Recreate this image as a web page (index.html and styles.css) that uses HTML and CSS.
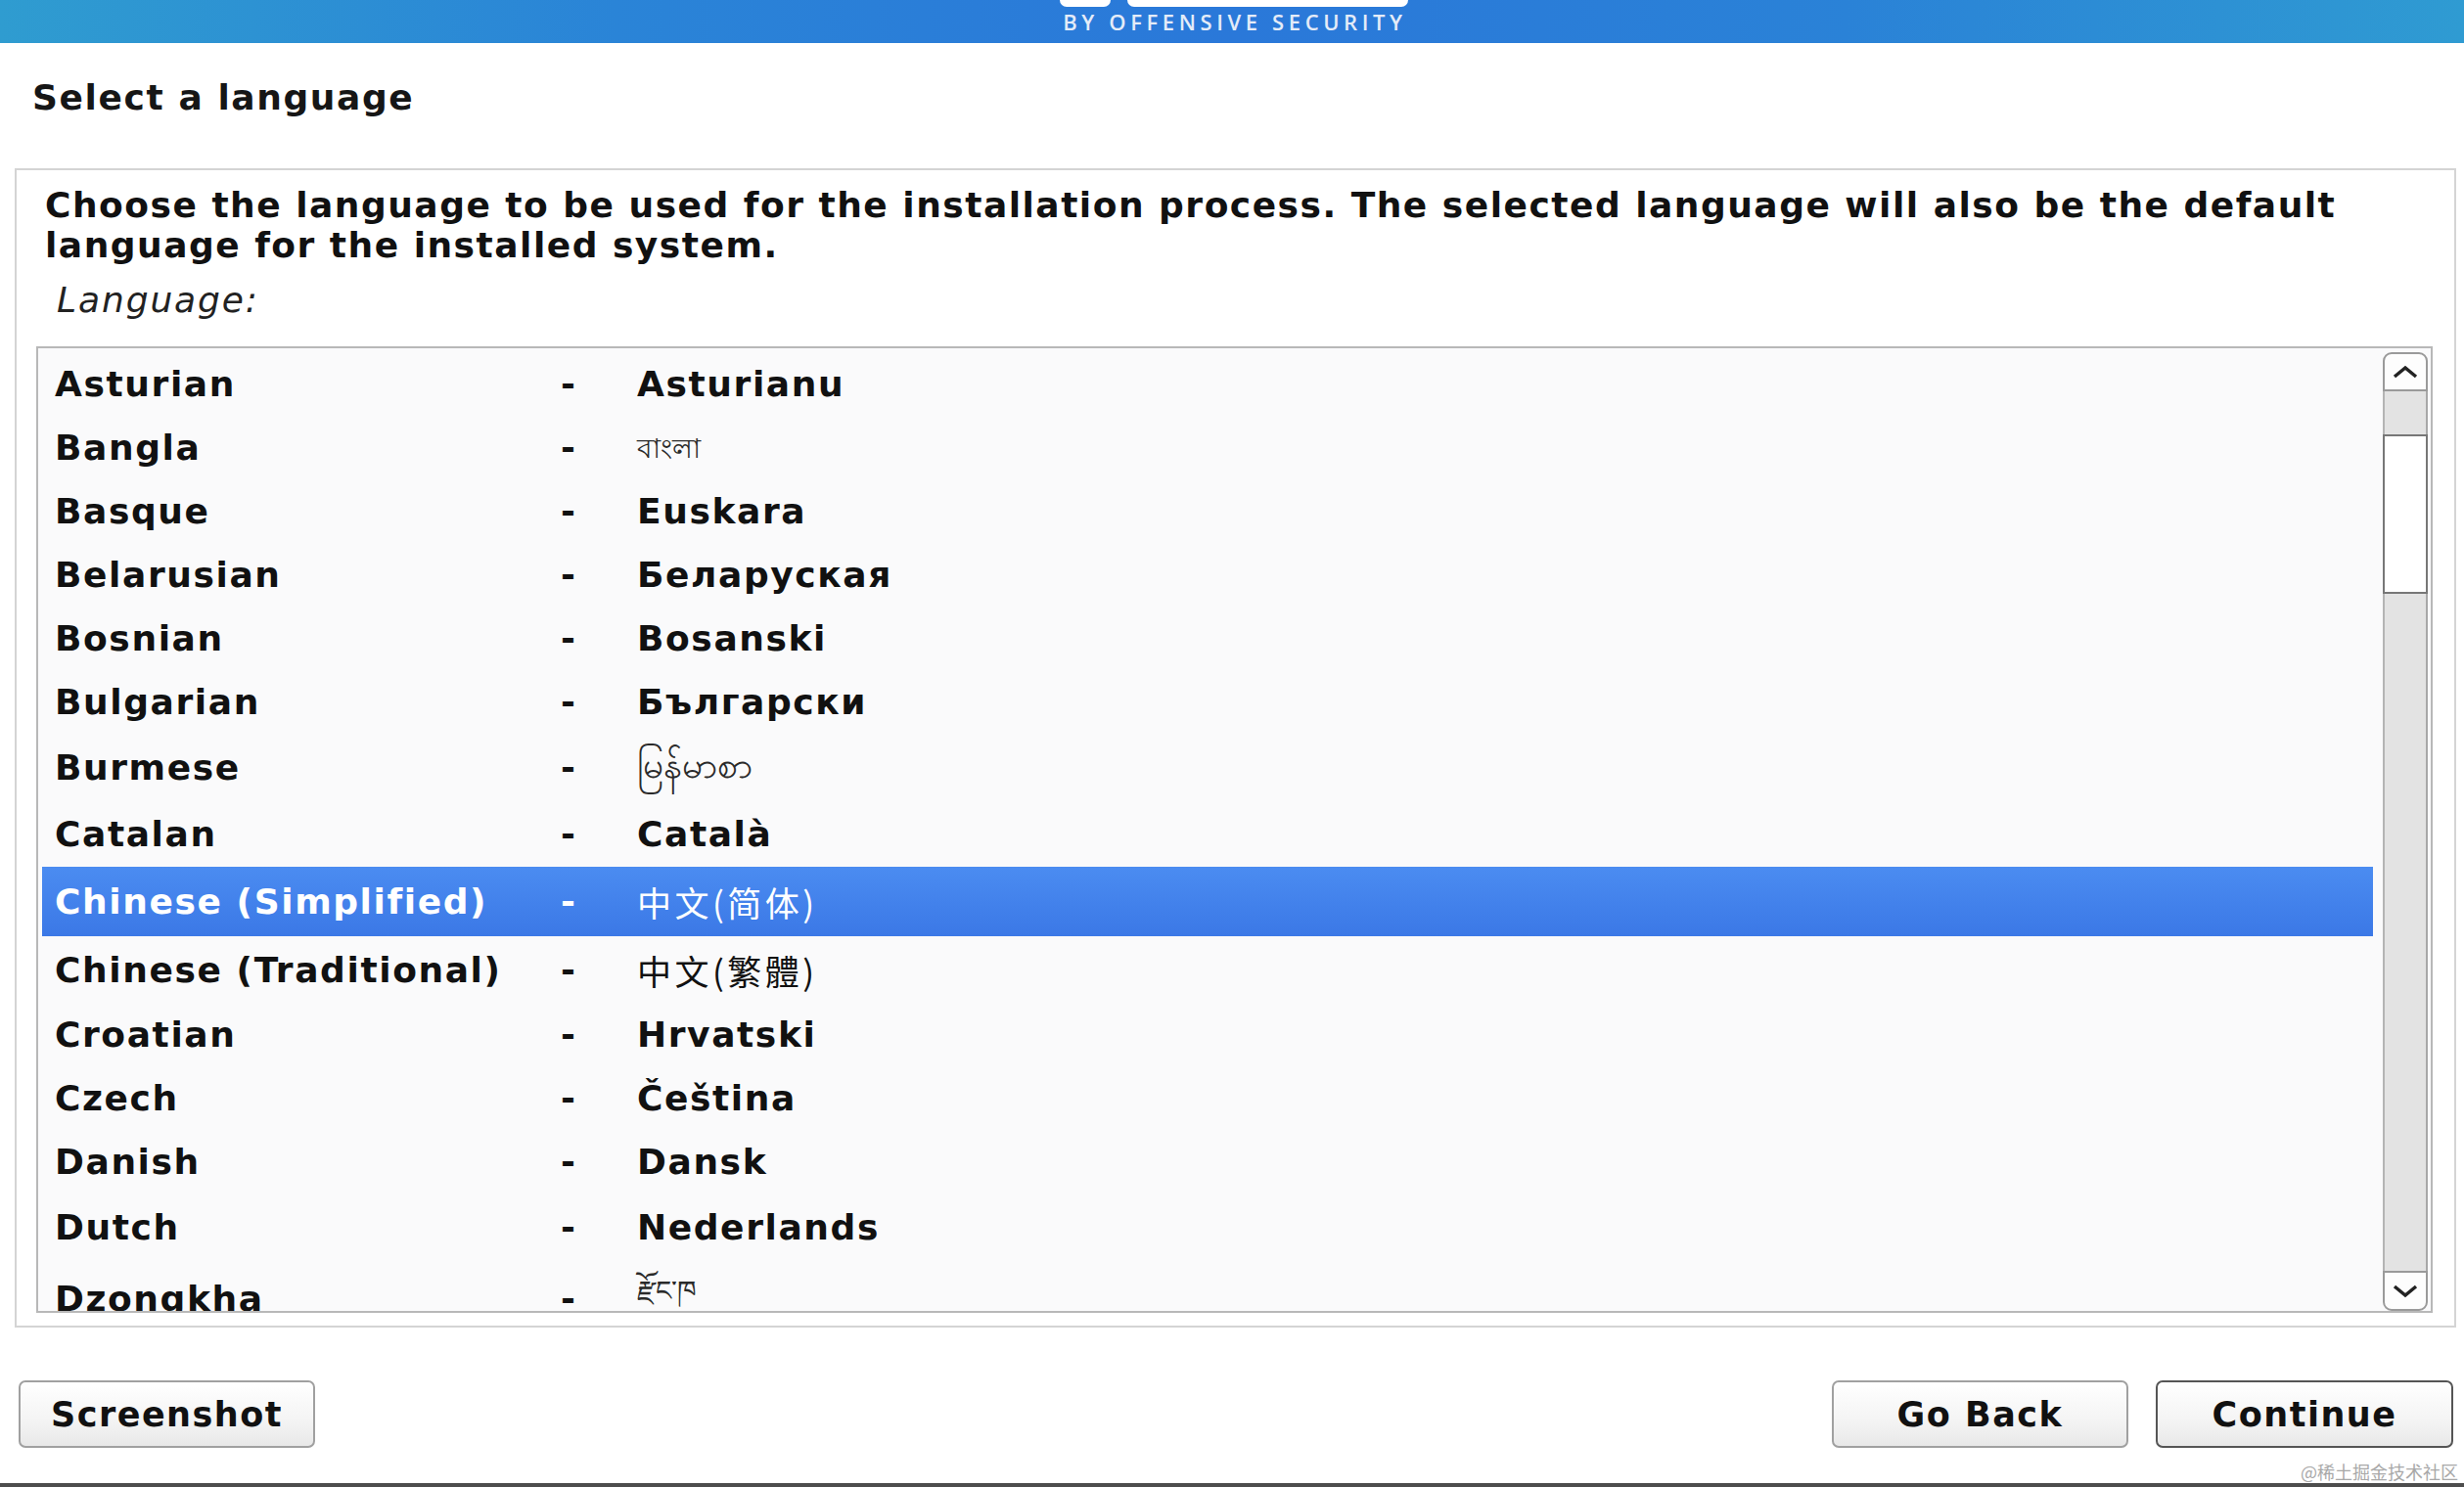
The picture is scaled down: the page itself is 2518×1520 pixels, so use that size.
FILE: index.html
```html
<!DOCTYPE html>
<html lang="en">
<head>
<meta charset="utf-8">
<title>Select a language</title>
<link rel="stylesheet" href="styles.css">
</head>
<body>
<header class="banner">
  <div class="logo">
    <span class="logo-piece small"></span>
    <span class="logo-piece big"></span>
  </div>
  <div class="tagline">BY OFFENSIVE SECURITY</div>
</header>

<main class="page">
  <h1 class="title">Select a language</h1>

  <section class="panel">
    <p class="desc">Choose the language to be used for the installation process. The selected language will also be the default language for the installed system.</p>
    <div class="label">Language:</div>

    <div class="listbox">
      <ul class="rows">
        <li class="row"><span class="name">Asturian</span><span class="dash">-</span><span class="native">Asturianu</span></li>
        <li class="row"><span class="name">Bangla</span><span class="dash">-</span><span class="native script bn">বাংলা</span></li>
        <li class="row"><span class="name">Basque</span><span class="dash">-</span><span class="native">Euskara</span></li>
        <li class="row"><span class="name">Belarusian</span><span class="dash">-</span><span class="native">Беларуская</span></li>
        <li class="row"><span class="name">Bosnian</span><span class="dash">-</span><span class="native">Bosanski</span></li>
        <li class="row"><span class="name">Bulgarian</span><span class="dash">-</span><span class="native">Български</span></li>
        <li class="row tall"><span class="name">Burmese</span><span class="dash">-</span><span class="native script my">မြန်မာစာ</span></li>
        <li class="row tall"><span class="name">Catalan</span><span class="dash">-</span><span class="native">Català</span></li>
        <li class="row taller selected"><span class="name">Chinese (Simplified)</span><span class="dash">-</span><span class="native cjk">中文(简体)</span></li>
        <li class="row tall"><span class="name">Chinese (Traditional)</span><span class="dash">-</span><span class="native cjk tc">中文(繁體)</span></li>
        <li class="row"><span class="name">Croatian</span><span class="dash">-</span><span class="native">Hrvatski</span></li>
        <li class="row"><span class="name">Czech</span><span class="dash">-</span><span class="native">Čeština</span></li>
        <li class="row"><span class="name">Danish</span><span class="dash">-</span><span class="native">Dansk</span></li>
        <li class="row tall"><span class="name">Dutch</span><span class="dash">-</span><span class="native">Nederlands</span></li>
        <li class="row tallest"><span class="name">Dzongkha</span><span class="dash">-</span><span class="native script bo">རྫོང་ཁ</span></li>
      </ul>

      <div class="scrollbar">
        <div class="sb-btn up">
          <svg width="26" height="14" viewBox="0 0 26 14"><polyline points="2,12 13,3 24,12" fill="none" stroke="#222" stroke-width="3.5"/></svg>
        </div>
        <div class="sb-track">
          <div class="sb-gap"></div>
          <div class="sb-thumb"></div>
        </div>
        <div class="sb-btn down">
          <svg width="26" height="14" viewBox="0 0 26 14"><polyline points="2,2 13,11 24,2" fill="none" stroke="#222" stroke-width="3.5"/></svg>
        </div>
      </div>
    </div>
  </section>

  <div class="buttons">
    <button class="btn">Screenshot</button>
    <div class="spacer"></div>
    <button class="btn">Go Back</button>
    <button class="btn primary">Continue</button>
  </div>

  <div class="bottom-line"></div>
  <div class="watermark">@稀土掘金技术社区</div>
</main>
</body>
</html>
```
FILE: styles.css
```css
* { box-sizing: border-box; }

html, body {
  margin: 0;
  padding: 0;
  width: 2518px;
  height: 1520px;
  overflow: hidden;
  background: #ffffff;
  font-family: "DejaVu Sans", "Noto Sans CJK SC", sans-serif;
  color: #111;
}

body {
  display: flex;
  flex-direction: column;
}

/* ---------- banner ---------- */
.banner {
  height: 44px;
  flex: none;
  display: flex;
  flex-direction: column;
  align-items: center;
  background: linear-gradient(90deg, #2f9cd0 0%, #2a84d7 25%, #2a78d9 50%, #2a82d7 75%, #2f9bd2 100%);
}

.logo {
  display: flex;
  gap: 17px;
  height: 7px;
  margin-left: 4px;
}

.logo-piece {
  display: block;
  height: 7px;
  background: #ffffff;
  border-radius: 0 0 7px 7px;
}
.logo-piece.small { width: 52px; }
.logo-piece.big { width: 287px; }

.tagline {
  margin-top: 4px;
  font-family: "Open Sans", "DejaVu Sans", sans-serif;
  font-weight: 600;
  font-size: 22px;
  line-height: 22px;
  letter-spacing: 4.6px;
  color: #e4ecf8;
  margin-left: 6px;
}

/* ---------- page ---------- */
.page {
  flex: 1;
  display: flex;
  flex-direction: column;
  position: relative;
}

.title {
  margin: 34px 0 0 33px;
  font-size: 36px;
  line-height: 44px;
  font-weight: bold;
  letter-spacing: 1.6px;
  color: #161616;
}

.panel {
  margin: 50px 8px 0 15px;
  border: 2px solid #d4d4d4;
  padding: 15px 22px 13px 20px;
  background: #fff;
}

.desc {
  margin: 0 0 0 9px;
  font-size: 36px;
  line-height: 41px;
  font-weight: bold;
  letter-spacing: 1.5px;
  color: #111;
}

.label {
  margin: 15px 0 0 21px;
  font-size: 36px;
  line-height: 41px;
  font-style: italic;
  letter-spacing: 1.9px;
  color: #222;
}

/* ---------- list ---------- */
.listbox {
  margin-top: 27px;
  height: 988px;
  border: 2px solid #b8b8b8;
  background: #fafafb;
  padding: 4px 3px 0 4px;
  display: flex;
  gap: 10px;
  overflow: hidden;
}

.rows {
  list-style: none;
  margin: 0;
  padding: 0;
  flex: 1;
  overflow: hidden;
}

.row {
  height: 65px;
  display: grid;
  grid-template-columns: 517px 78px 1fr;
  align-items: center;
  padding-left: 13px;
  font-size: 36px;
  font-weight: bold;
  letter-spacing: 1.6px;
  color: #111;
  white-space: nowrap;
}
.row.tall { height: 68px; }
.row.taller { height: 71px; }
.row.tallest { height: 72px; }

.row.selected {
  background: linear-gradient(180deg, #4b8cf1 0%, #3b78e6 100%);
  color: #ffffff;
}

.native.script {
  font-family: "Noto Sans", "DejaVu Sans", sans-serif;
  font-weight: normal;
  font-size: 28px;
  letter-spacing: 0;
  color: #2a2a2a;
}
.native.script.bn { padding-top: 5px; }
.native.script.my { font-size: 37px; }

.native.cjk {
  font-family: "Noto Sans CJK SC", "DejaVu Sans", sans-serif;
  font-weight: normal;
  font-size: 35px;
  letter-spacing: 3.5px;
}
.native.cjk.tc {
  font-family: "Noto Sans CJK TC", "DejaVu Sans", sans-serif;
}

/* ---------- scrollbar ---------- */
.scrollbar {
  width: 46px;
  flex: none;
  display: flex;
  flex-direction: column;
  height: 980px;
}

.sb-btn {
  height: 40px;
  flex: none;
  background: #fdfdfd;
  border: 2px solid #9a9a9a;
  display: flex;
  align-items: center;
  justify-content: center;
}
.sb-btn.up { border-radius: 9px 9px 0 0; }
.sb-btn.down { border-radius: 0 0 9px 9px; height: 41px; }

.sb-track {
  flex: 1;
  background: #e3e3e3;
  border-left: 2px solid #b4b4b4;
  border-right: 2px solid #a8a8a8;
  display: flex;
  flex-direction: column;
}
.sb-gap { height: 44px; flex: none; }
.sb-thumb {
  height: 163px;
  margin: 0 -2px;
  background: #ffffff;
  border: 2px solid #777777;
}

/* ---------- buttons ---------- */
.buttons {
  margin-top: 54px;
  display: flex;
  gap: 28px;
  padding: 0 11px 0 19px;
}
.spacer { flex: 1; }

.btn {
  width: 303px;
  height: 69px;
  font-family: "DejaVu Sans", sans-serif;
  font-size: 35px;
  font-weight: bold;
  letter-spacing: 1.5px;
  color: #111;
  background: linear-gradient(180deg, #ffffff 0%, #f4f4f4 60%, #e8e8e8 100%);
  border: 2px solid #a0a0a0;
  border-radius: 7px;
  padding: 0;
}
.btn.primary {
  width: 304px;
  border-color: #555555;
}

.bottom-line {
  margin-top: auto;
  height: 4px;
  background: #4d4d4d;
}

.watermark {
  position: absolute;
  right: 6px;
  bottom: 7px;
  font-family: "Noto Sans CJK SC", sans-serif;
  font-size: 18px;
  line-height: 18px;
  color: #a8a8a8;
}
```
